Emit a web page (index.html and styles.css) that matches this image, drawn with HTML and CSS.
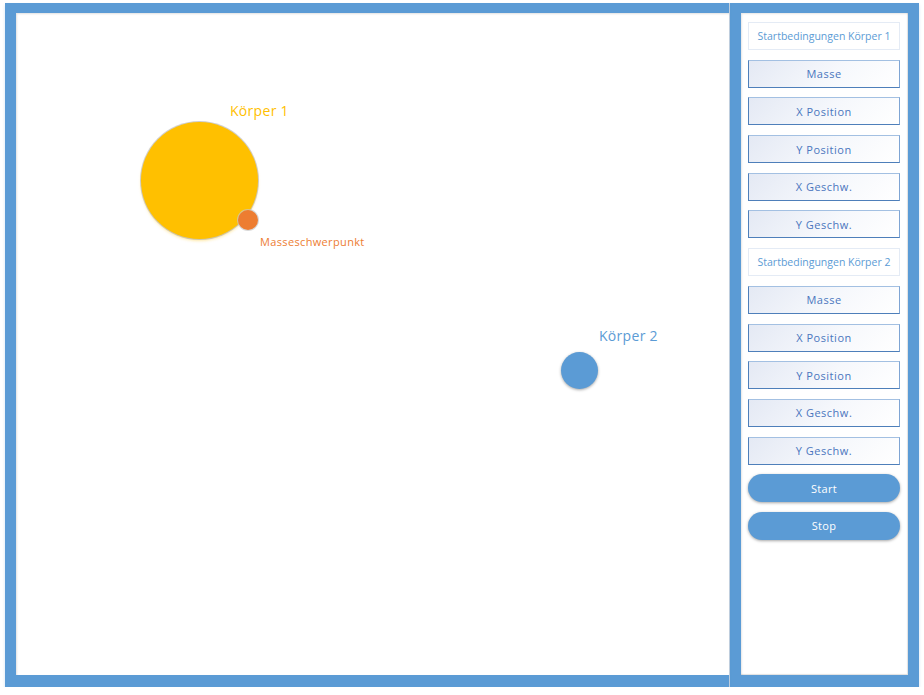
FILE: index.html
```html
<!DOCTYPE html>
<html lang="de">
<head>
<meta charset="utf-8">
<title>Zweikörper-Simulation</title>
<link rel="stylesheet" href="styles.css">
</head>
<body>
<div class="app">
  <main class="canvas">
    <div class="body-label label-1">Körper 1</div>
    <div class="planet planet-1"></div>
    <div class="cog"></div>
    <div class="cog-label">Masseschwerpunkt</div>
    <div class="body-label label-2">Körper 2</div>
    <div class="planet planet-2"></div>
  </main>
  <aside class="side">
    <div class="panel">
      <div class="heading">Startbedingungen Körper 1</div>
      <div class="field">Masse</div>
      <div class="field">X Position</div>
      <div class="field">Y Position</div>
      <div class="field">X Geschw.</div>
      <div class="field">Y Geschw.</div>
      <div class="heading">Startbedingungen Körper 2</div>
      <div class="field">Masse</div>
      <div class="field">X Position</div>
      <div class="field">Y Position</div>
      <div class="field">X Geschw.</div>
      <div class="field">Y Geschw.</div>
      <button class="btn">Start</button>
      <button class="btn">Stop</button>
    </div>
  </aside>
</div>
</body>
</html>
```

FILE: styles.css
```css
html, body {
  margin: 0;
  padding: 0;
  background: #ffffff;
}
body {
  font-family: "Open Sans", "Liberation Sans", sans-serif;
}
.app {
  display: flex;
  padding: 3px 0 0 5px;
  align-items: flex-start;
}
.canvas {
  position: relative;
  box-sizing: border-box;
  width: 724px;
  height: 684px;
  border-style: solid;
  border-color: #5b9bd5;
  border-width: 10px 0 12px 11px;
  background: #ffffff;
  box-shadow: inset 1px 1px 2px rgba(0,0,0,0.12), 0 2px 3px rgba(91,155,213,0.25);
}
.side {
  box-sizing: border-box;
  width: 189px;
  height: 684px;
  margin-left: 1px;
  border-style: solid;
  border-color: #5b9bd5;
  border-width: 10px 11px 12px 11px;
  background: #ffffff;
  box-shadow: -1px 0 0 #c9d3de, 0 2px 3px rgba(91,155,213,0.25);
}
.panel {
  display: flex;
  flex-direction: column;
  gap: 9.7px;
  padding: 9px 8px 0 7px;
  height: 100%;
  box-sizing: border-box;
  box-shadow: inset 1px 1px 2px rgba(0,0,0,0.1), inset -1px -1px 1px rgba(0,0,0,0.12);
}
.heading, .field, .btn {
  box-sizing: border-box;
  height: 28px;
  flex: 0 0 28px;
  display: flex;
  align-items: center;
  justify-content: center;
  font-size: 11px;
}
.heading {
  border: 1px solid #e4ebf5;
  color: #5b9bd5;
  background: #ffffff;
  font-size: 10.5px;
}
.field {
  border: 1px solid #4e7fba;
  border-top-color: #a3c0e2;
  border-right-color: #7fa5d4;
  background: linear-gradient(135deg, #e4e9f4 0%, #f6f8fc 55%, #ffffff 100%);
  color: #4a76be;
  letter-spacing: 0.5px;
}
.btn {
  border: none;
  border-radius: 14px;
  background: #5b9bd5;
  color: #ffffff;
  font-family: inherit;
  padding: 0;
  letter-spacing: 0.3px;
  box-shadow: 0 1px 3px rgba(0,0,0,0.35);
}
.planet {
  position: absolute;
  border-radius: 50%;
}
.planet-1 {
  left: 125px;
  top: 109px;
  width: 117px;
  height: 117px;
  background: #ffc000;
  box-shadow: 0 0 0 1px rgba(160,160,160,0.5), 0 2px 3px rgba(255,192,0,0.35);
}
.cog {
  position: absolute;
  left: 222px;
  top: 197px;
  width: 20px;
  height: 20px;
  border-radius: 50%;
  background: #ed7d31;
  box-shadow: 0 0 0 1px rgba(200,200,200,0.7);
}
.planet-2 {
  left: 545px;
  top: 339px;
  width: 37px;
  height: 37px;
  background: #5b9bd5;
  box-shadow: 0 1px 3px rgba(0,0,0,0.35);
}
.body-label {
  position: absolute;
  font-size: 14px;
  line-height: 18px;
  letter-spacing: 0.3px;
}
.label-1 {
  left: 214px;
  top: 89px;
  color: #ffc000;
}
.label-2 {
  left: 583px;
  top: 314px;
  color: #5b9bd5;
}
.cog-label {
  position: absolute;
  left: 244px;
  top: 222px;
  font-size: 11px;
  line-height: 14px;
  letter-spacing: 0.35px;
  color: #ed7d31;
}
```
